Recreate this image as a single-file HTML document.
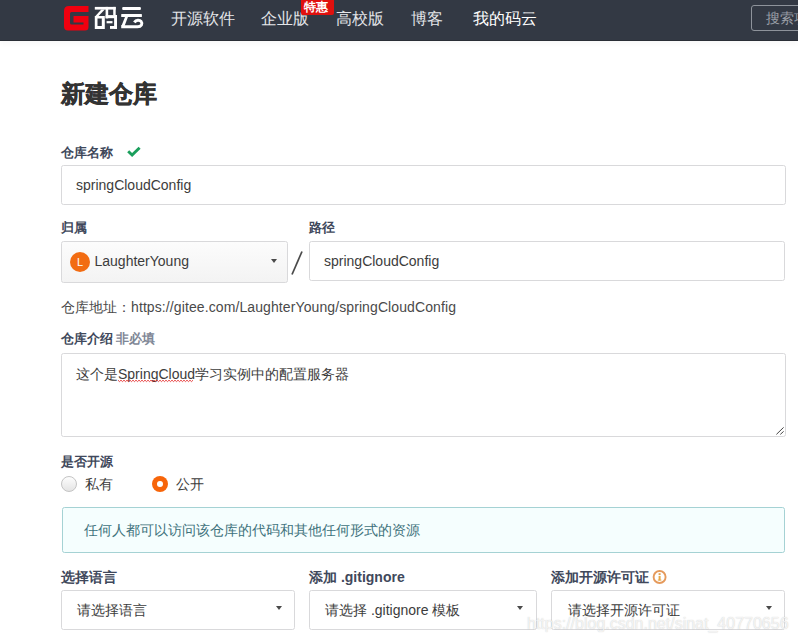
<!DOCTYPE html>
<html><head><meta charset="utf-8">
<style>
*{box-sizing:border-box;margin:0;padding:0}
html,body{width:798px;height:641px;overflow:hidden;background:#fff;font-family:"Liberation Sans",sans-serif;color:#333}
.a{position:absolute;white-space:nowrap}
#hdr{position:absolute;left:0;top:0;width:798px;height:41px;background:#333944;border-bottom:1px solid #2a2e36;box-shadow:0 3px 5px rgba(0,0,0,0.03)}
.nav{position:absolute;top:-1.2px;height:40px;line-height:40px;font-size:16px;color:#e4e6e9}
.badge{position:absolute;left:300.5px;top:0;width:33.5px;height:15px;background:#e0100e;color:#fff;font-size:12px;line-height:14px;padding-left:3.5px;font-weight:bold;border-radius:0 0 2px 2px}
.search{position:absolute;white-space:nowrap;overflow:hidden;left:751px;top:5px;width:60px;height:26px;border:1px solid #8e939b;border-radius:3px;color:#9a9ea6;font-size:14px;line-height:24px;padding-left:14px}
.title{left:61px;top:78px;font-size:24px;font-weight:bold;color:#333;line-height:32px;-webkit-text-stroke:0.5px #333}
.lbl{font-size:13px;font-weight:bold;color:#40485b;line-height:16px}
.box{position:absolute;border:1px solid #d9d9db;border-radius:2.5px;background:#fff}
.txt{font-size:14px;color:#3c3c3c;line-height:20px}
.caret{position:absolute;width:0;height:0;border-left:3.5px solid transparent;border-right:3.5px solid transparent;border-top:4px solid #4a4a4a}
</style></head><body>
<div id="hdr">
  <svg class="a" style="left:64px;top:5.5px" width="25" height="25" viewBox="0 0 25 25"><path fill-rule="evenodd" fill="#f0000f" d="M5 0H24.5V6H7.5Q6 6 6 7.5V17Q6 18.5 7.5 18.5H19.5V16.5H9.5V10H24.5V21Q24.5 24.5 21 24.5H4Q0 24.5 0 20.5V5Q0 0 5 0Z"/></svg>
  <svg class="a" style="left:0;top:0" width="150" height="40" fill="#fff">
<path d="M94.8 6.9H115.7V9.6H94.8Z"/>
<path d="M101.3 9.5H104.8L98.3 16.2H95.2Z"/>
<path fill-rule="evenodd" d="M94.8 16H104.8V28.9H94.8Z M97.5 18.4V25.9H101.8V18.4Z"/>
<path d="M105.6 6.9H108.2V18.4H105.6Z"/>
<path d="M113.2 6.9H115.7V15.3H113.2Z"/>
<path d="M105.6 15.1H117V18.2H105.6Z"/>
<path d="M114.1 15.1H117V28.9H114.1Z"/>
<path d="M106.6 21.1H112.5V23.3H106.6Z"/>
<path d="M110 26H117V28.9H110Z"/>
<rect x="122.2" y="7" width="18.7" height="3.1" rx="1"/>
<rect x="121.2" y="13.9" width="20.7" height="3.1" rx="0.6"/>
<path d="M125.1 16.8H128L124.6 26H121.4Z"/>
<path d="M121.2 26.8H137.5C141.5 26.8 142.8 23.5 141.2 21.6C139.6 19.8 136.2 19.8 134.3 22.3" fill="none" stroke="#fff" stroke-width="3"/>
</svg>
  <div class="nav a" style="left:171px">开源软件</div>
  <div class="nav a" style="left:261px">企业版</div>
  <div class="badge">特惠</div>
  <div class="nav a" style="left:336px">高校版</div>
  <div class="nav a" style="left:411px">博客</div>
  <div class="nav a" style="left:473px;color:#fff">我的码云</div>
  <div class="search">搜索项目</div>
</div>

<div class="a title">新建仓库</div>

<div class="a lbl" style="left:61px;top:145px">仓库名称</div>
<svg class="a" style="left:122px;top:142px" width="24" height="20"><path d="M6.2 9.3L10.1 13.1L17.6 5.8" stroke="#1a9f5c" stroke-width="2.9" fill="none"/></svg>
<div class="box" style="left:61px;top:165px;width:725px;height:40px"></div>
<div class="a txt" style="left:76px;top:175px">springCloudConfig</div>

<div class="a lbl" style="left:61px;top:220px">归属</div>
<div class="a lbl" style="left:309px;top:220px">路径</div>
<div class="box" style="left:61px;top:241px;width:227px;height:42px;background:linear-gradient(#fcfcfc,#f3f3f3)"></div>
<div class="a" style="left:70px;top:252px;width:20px;height:20px;border-radius:50%;background:#f26c12;color:#fff;font-size:11px;line-height:20px;text-align:center">L</div>
<div class="a txt" style="left:94.5px;top:251px">LaughterYoung</div>
<div class="caret" style="left:271px;top:258.5px"></div>
<svg class="a" style="left:288px;top:248px" width="18" height="30"><line x1="4" y1="26.5" x2="14" y2="3.5" stroke="#4a4a4a" stroke-width="1.7"/></svg>
<div class="box" style="left:309px;top:241px;width:476px;height:40px"></div>
<div class="a txt" style="left:324px;top:251px">springCloudConfig</div>

<div class="a" style="left:61px;top:297px;font-size:14px;line-height:20px;color:#4a4a4a">仓库地址：<span style="letter-spacing:0.1px">https://gitee.com/LaughterYoung/springCloudConfig</span></div>

<div class="a lbl" style="left:61px;top:331px">仓库介绍 <span style="color:#7f8796;margin-left:-1px">非必填</span></div>
<div class="box" style="left:61px;top:353px;width:725px;height:84px"></div>
<div class="a txt" style="left:76px;top:363.5px">这个是SpringCloud学习实例中的配置服务器</div>

<div class="a lbl" style="left:61px;top:454px">是否开源</div>
<div class="a" style="left:61px;top:476px;width:16px;height:16px;border-radius:50%;border:1px solid #c4c4c4;background:linear-gradient(#fdfdfd,#e4e4e4)"></div>
<div class="a txt" style="left:85px;top:474px">私有</div>
<div class="a" style="left:152px;top:476px;width:16px;height:16px;border-radius:50%;background:#f7650a"></div>
<div class="a" style="left:157.1px;top:481.1px;width:5.8px;height:5.8px;border-radius:50%;background:#fff"></div>
<div class="a txt" style="left:176px;top:474px">公开</div>

<div class="a" style="left:62px;top:507px;width:723px;height:46px;border:1px solid #a5d2d4;border-radius:2.5px;background:#f5fefe"></div>
<div class="a" style="left:83.5px;top:520px;font-size:14px;line-height:20px;color:#3e727c">任何人都可以访问该仓库的代码和其他任何形式的资源</div>

<div class="a lbl" style="left:61px;top:569px;font-size:14px;line-height:16px">选择语言</div>
<div class="a lbl" style="left:309px;top:569px;font-size:14px;line-height:16px">添加 .gitignore</div>
<div class="a lbl" style="left:551px;top:569px;font-size:14px;line-height:16px">添加开源许可证</div>
<svg class="a" style="left:650px;top:568px" width="20" height="20"><circle cx="9.6" cy="9" r="6" fill="none" stroke="#e59a5c" stroke-width="1.9"/><rect x="8.6" y="5.2" width="2" height="1.8" fill="#e0a050"/><rect x="8.6" y="7.9" width="2" height="4.6" fill="#e8a848"/><rect x="7.8" y="11.6" width="3.6" height="0.9" fill="#e8a848"/></svg>

<div class="box" style="left:61px;top:590px;width:234px;height:40px"></div>
<div class="a txt" style="left:77px;top:600px">请选择语言</div>
<div class="caret" style="left:275.5px;top:605.5px"></div>
<div class="box" style="left:309px;top:590px;width:228px;height:40px"></div>
<div class="a txt" style="left:325px;top:600px">请选择 .gitignore 模板</div>
<div class="caret" style="left:517px;top:605.5px"></div>
<div class="box" style="left:551px;top:590px;width:234px;height:40px"></div>
<div class="a txt" style="left:567.5px;top:600px">请选择开源许可证</div>
<div class="caret" style="left:766px;top:605.5px"></div>

<div class="a" style="left:527px;top:613.5px;font-size:16px;line-height:20px;color:rgba(255,255,255,0.75);text-shadow:0 0 1px rgba(120,120,120,0.42)">https://blog.csdn.net/sinat_40770656</div>
<svg class="a" style="left:770px;top:420px" width="20" height="20"><line x1="6.4" y1="14.4" x2="13.6" y2="7.4" stroke="#444" stroke-width="1"/><line x1="10.3" y1="14.4" x2="13.6" y2="11.4" stroke="#444" stroke-width="1"/></svg>
<svg class="a" style="left:0;top:0" width="798" height="641"><polyline points="118.0,380.2 119.5,381.6 121.0,380.2 122.5,381.6 124.0,380.2 125.5,381.6 127.0,380.2 128.5,381.6 130.0,380.2 131.5,381.6 133.0,380.2 134.5,381.6 136.0,380.2 137.5,381.6 139.0,380.2 140.5,381.6 142.0,380.2 143.5,381.6 145.0,380.2 146.5,381.6 148.0,380.2 149.5,381.6 151.0,380.2 152.5,381.6 154.0,380.2 155.5,381.6 157.0,380.2 158.5,381.6 160.0,380.2 161.5,381.6 163.0,380.2 164.5,381.6 166.0,380.2 167.5,381.6 169.0,380.2 170.5,381.6 172.0,380.2 173.5,381.6 175.0,380.2 176.5,381.6 178.0,380.2 179.5,381.6 181.0,380.2 182.5,381.6 184.0,380.2 185.5,381.6 187.0,380.2 188.5,381.6 190.0,380.2 191.5,381.6 193.0,380.2" fill="none" stroke="#e43030" stroke-width="0.9"/></svg>
</body></html>
